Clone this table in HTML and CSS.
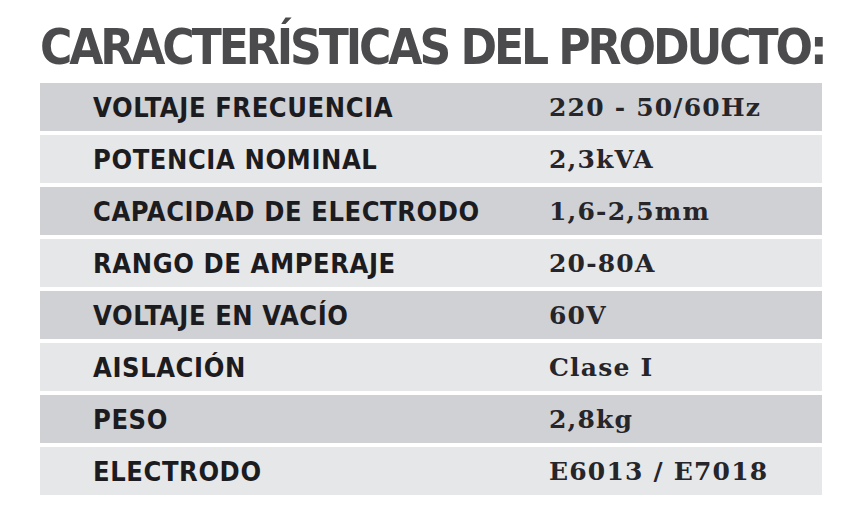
FILE: index.html
```html
<!DOCTYPE html>
<html lang="es">
<head>
<meta charset="utf-8">
<title>Características del producto</title>
<link rel="stylesheet" href="styles.css">
</head>
<body>
<div class="sheet">
  <h1 class="title">CARACTERÍSTICAS DEL PRODUCTO:</h1>
  <div class="specs">
    <div class="row dark"><span class="label">VOLTAJE FRECUENCIA</span><span class="value">220 - 50/60Hz</span></div>
    <div class="row light"><span class="label">POTENCIA NOMINAL</span><span class="value">2,3kVA</span></div>
    <div class="row dark"><span class="label">CAPACIDAD DE ELECTRODO</span><span class="value">1,6-2,5mm</span></div>
    <div class="row light"><span class="label">RANGO DE AMPERAJE</span><span class="value">20-80A</span></div>
    <div class="row dark"><span class="label">VOLTAJE EN VACÍO</span><span class="value">60V</span></div>
    <div class="row light"><span class="label">AISLACIÓN</span><span class="value">Clase I</span></div>
    <div class="row dark"><span class="label">PESO</span><span class="value">2,8kg</span></div>
    <div class="row light"><span class="label">ELECTRODO</span><span class="value">E6013 / E7018</span></div>
  </div>
</div>
</body>
</html>
```
FILE: styles.css
```css
html, body {
  margin: 0;
  padding: 0;
  background: #ffffff;
}
.sheet {
  width: 782px;
  margin-left: 40px;
  padding-top: 21px;
}
.title {
  margin: 0 0 8px 0;
  font-family: "DejaVu Sans Condensed", "DejaVu Sans", sans-serif;
  font-stretch: condensed;
  font-weight: 700;
  font-size: 49px;
  line-height: 54px;
  letter-spacing: -3.05px;
  color: #4b4b4d;
  white-space: nowrap;
}
.specs {
  display: flex;
  flex-direction: column;
  gap: 4px;
}
.row {
  display: flex;
  align-items: center;
  height: 48px;
}
.dark { background: #cfd1d4; }
.light { background: #e6e7e8; }
.label {
  width: 456px;
  padding-left: 53px;
  font-family: "DejaVu Sans Condensed", "DejaVu Sans", sans-serif;
  font-stretch: condensed;
  font-weight: 700;
  font-size: 27px;
  letter-spacing: 0.6px;
  color: #1b1b20;
  white-space: nowrap;
}
.value {
  font-family: "DejaVu Serif", serif;
  font-weight: 700;
  font-size: 25px;
  letter-spacing: 1.2px;
  color: #25252a;
  white-space: nowrap;
}
```
